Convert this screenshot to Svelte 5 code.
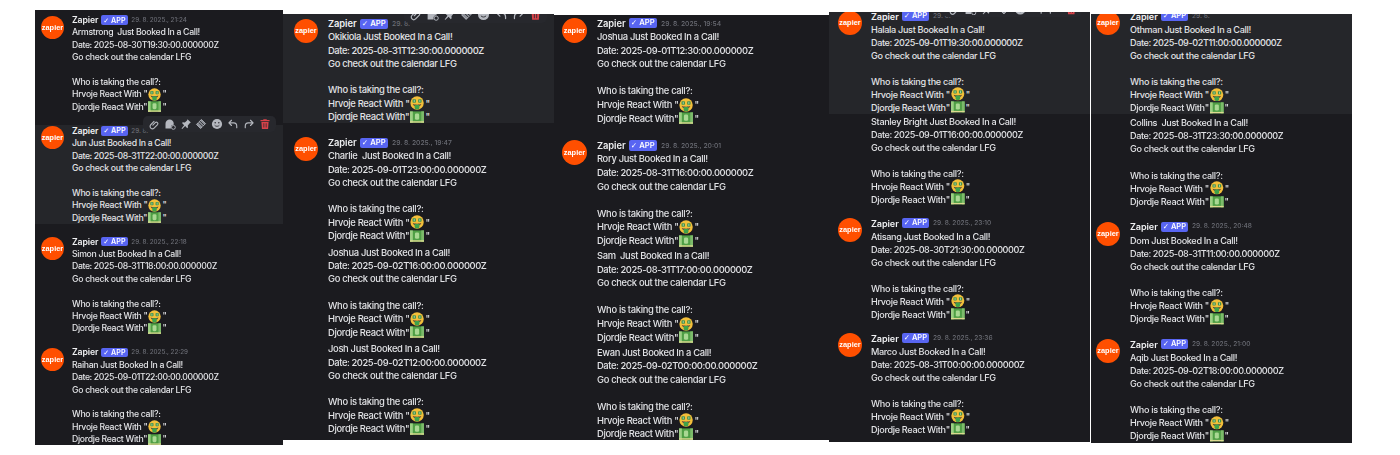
<script lang="ts">
	type Message = {
		name?: string;
		date: string;
		time?: string;
		hover?: boolean;
		tools?: boolean;
	};

	const columns: { cls: string; messages: Message[] }[] = [
		{
			cls: 'col-a',
			messages: [
				{ name: 'Armstrong ', date: '2025-08-30T19:30', time: '29. 8. 2025., 21:24' },
				{ name: 'Jun', date: '2025-08-31T22:00', time: '29. 8.', hover: true, tools: true },
				{ name: 'Simon', date: '2025-08-31T18:00', time: '29. 8. 2025., 22:18' },
				{ name: 'Raihan', date: '2025-09-01T22:00', time: '29. 8. 2025., 22:29' }
			]
		},
		{
			cls: 'col-b',
			messages: [
				{ name: 'Okikiola', date: '2025-08-31T12:30', time: '29. 8.', hover: true, tools: true },
				{ name: 'Charlie ', date: '2025-09-01T23:00', time: '29. 8. 2025., 19:47' },
				{ name: 'Joshua', date: '2025-09-02T16:00' },
				{ name: 'Josh', date: '2025-09-02T12:00' }
			]
		},
		{
			cls: 'col-c',
			messages: [
				{ name: 'Joshua', date: '2025-09-01T12:30', time: '29. 8. 2025., 19:54' },
				{ name: 'Rory', date: '2025-08-31T16:00', time: '29. 8. 2025., 20:01' },
				{ name: 'Sam ', date: '2025-08-31T17:00' },
				{ name: 'Ewan', date: '2025-09-02T00:00' }
			]
		},
		{
			cls: 'col-d',
			messages: [
				{ name: 'Halala', date: '2025-09-01T19:30', time: '29. 8.', hover: true, tools: true },
				{ name: 'Stanley Bright', date: '2025-09-01T16:00' },
				{ name: 'Atisang', date: '2025-08-30T21:30', time: '29. 8. 2025., 23:10' },
				{ name: 'Marco', date: '2025-08-31T00:00', time: '29. 8. 2025., 23:36' }
			]
		},
		{
			cls: 'col-e',
			messages: [
				{ name: 'Othman', date: '2025-09-02T11:00', time: '29. 8.', hover: true, tools: true },
				{ name: 'Collins ', date: '2025-08-31T23:30' },
				{ name: 'Dom', date: '2025-08-31T11:00', time: '29. 8. 2025., 20:48' },
				{ name: 'Aqib', date: '2025-09-02T18:00', time: '29. 8. 2025., 21:00' }
			]
		}
	];
</script>

{#snippet moneyFace()}
	<svg class="emoji" viewBox="0 0 20 20" aria-hidden="true">
		<circle cx="10" cy="10" r="9.5" fill="#f3bf3a" />
		<path d="M4 11.5c1.5 1.2 10.5 1.2 12 0-.4 2-2 3-3 3.2H7c-1-.2-2.6-1.2-3-3.2z" fill="#5d4037" />
		<path d="M6.6 12.6h6.8v4.2c0 1.4-1.4 2.4-3.4 2.4s-3.4-1-3.4-2.4z" fill="#3fa14a" />
		<rect x="3.6" y="4.6" width="4.8" height="5" rx="1" fill="#3f8f46" />
		<rect x="11.6" y="4.6" width="4.8" height="5" rx="1" fill="#3f8f46" />
		<path d="M6 5.4v3.4M14 5.4v3.4" stroke="#cfeccd" stroke-width="1" />
	</svg>
{/snippet}

{#snippet bill()}
	<svg class="emoji" viewBox="0 0 20 20" aria-hidden="true">
		<rect x="0" y="2" width="20" height="16" fill="#4f9f45" />
		<rect x="0" y="2" width="4" height="16" fill="#9ccf84" />
		<rect x="16" y="2" width="4" height="16" fill="#7dbb6b" />
		<rect x="7" y="5" width="6" height="9" rx="2" fill="#a9d893" />
		<rect x="0" y="16" width="20" height="2" fill="#dcd98f" />
	</svg>
{/snippet}

{#snippet toolbar()}
	<div class="toolbar">
		<svg viewBox="0 0 16 16" fill="none" stroke="#b5b8bf" stroke-width="1.5" stroke-linecap="round">
			<path d="M6.5 9.5l3.4-3.6a2 2 0 0 1 2.8 2.8l-4.6 4.7a3.1 3.1 0 0 1-4.4-4.4l4.3-4.4" />
		</svg>
		<svg viewBox="0 0 16 16" fill="#b5b8bf">
			<path d="M2 14V7.500a5.500 5.500 0 0 1 11 0v1.500a3.500 3.500 0 0 0-3.500 5z" />
			<circle cx="12.500" cy="12.500" r="2.600" fill="none" stroke="#b5b8bf" stroke-width="1.200" />
		</svg>
		<svg viewBox="0 0 16 16" fill="#b5b8bf">
			<path d="M10 1.500l4.500 4.500-1.300.7-2.800 3.300.2 2.700-1 1-2.700-3L3 14.500l-1-.5 3.500-4.500L2.700 6.800l1-1 2.700.2 3-2.800z" />
		</svg>
		<svg viewBox="0 0 16 16" fill="none" stroke="#b5b8bf" stroke-width="1.200">
			<path d="M2 8.500L8.500 2l5.500 5.500L7.500 14z" fill="#8b8e96" />
			<path d="M5 6l5.500 5.500M6.800 4.200l5.500 5.500" stroke="#2a2b30" />
		</svg>
		<svg viewBox="0 0 16 16">
			<circle cx="8" cy="8" r="6.800" fill="#b5b8bf" />
			<circle cx="5.600" cy="6.400" r="1" fill="#2a2b30" />
			<circle cx="10.400" cy="6.400" r="1" fill="#2a2b30" />
			<path d="M4.800 9.600c1.400 2 5 2 6.400 0" fill="none" stroke="#2a2b30" stroke-width="1.100" />
		</svg>
		<svg viewBox="0 0 16 16" fill="none" stroke="#b5b8bf" stroke-width="1.500" stroke-linecap="round" stroke-linejoin="round">
			<path d="M6 3L2.500 6.500 6 10M3 6.500h6c2.600 0 4 1.800 4 4.500v2" />
		</svg>
		<svg viewBox="0 0 16 16" fill="none" stroke="#b5b8bf" stroke-width="1.500" stroke-linecap="round" stroke-linejoin="round">
			<path d="M10 3l3.500 3.500L10 10M13 6.500H7c-2.600 0-4 1.800-4 4.500v2" />
		</svg>
		<svg viewBox="0 0 16 16" fill="#d9434a">
			<path d="M6 1.500h4l.6 1.300H14v1.400H2V2.800h3.400z" />
			<path d="M3.200 5.200h9.600l-.7 9.300H3.900zM6 7v5.500h1V7zm3 0v5.500h1V7z" fill-rule="evenodd" />
		</svg>
	</div>
{/snippet}

<main class="page">
	{#each columns as column}
		<section class="column {column.cls}">
			{#each column.messages as msg}
				<article class="message" class:hover={msg.hover} class:grouped={!msg.time}>
					{#if msg.time}
						<div class="avatar">zapier</div>
					{/if}
					<div class="body">
						{#if msg.time}
							<div class="head">
								<span class="author">Zapier</span>
								<span class="badge"><span class="tick">✓</span> APP</span>
								<span class="time">{msg.time}</span>
							</div>
						{/if}
						<div class="title">{msg.name} Just Booked In a Call!</div>
						<div class="date">Date: {msg.date}:00.000000Z</div>
						<div>Go check out the calendar LFG</div>
						<div class="blank"></div>
						<div>Who is taking the call?:</div>
						<div class="react">Hrvoje React With "{@render moneyFace()}"</div>
						<div class="react">Djordje React With"{@render bill()}"</div>
					</div>
					{#if msg.tools}
						{@render toolbar()}
					{/if}
				</article>
			{/each}
		</section>
	{/each}
</main>

<style>
	:global(body) {
		background: #ffffff;
	}

	.page {
		display: flex;
		align-items: flex-start;
		height: 455px;
		padding-left: 35px;
		box-sizing: border-box;
		filter: blur(0.35px);
	}

	.column {
		flex: none;
		box-sizing: border-box;
		overflow: hidden;
		background: #1b1b1f;
		color: #e2e3e6;
		font-family: Inter, 'Noto Sans', sans-serif;
		font-size: var(--fs);
		font-weight: 500;
		line-height: var(--lh);
		letter-spacing: -0.035em;
		white-space: nowrap;
	}

	.col-a {
		--fs: 8.7px;
		--lh: 12.4px;
		--av: 23px;
		--left: 6px;
		--av-gap: 8px;
		--top: 4px;
		--gap: 11.6px;
		--gap-grouped: 2px;
		--tools-top: -9px;
		--tools-right: 7px;
		--icon: 12px;
		--icon-gap: 3.9px;
		width: 248px;
		height: 435px;
		margin-top: 10px;
	}

	.col-b {
		--fs: 9.4px;
		--lh: 13.3px;
		--av: 24px;
		--left: 11px;
		--av-gap: 10px;
		--lead: 3px;
		--gap: 12.6px;
		--gap-grouped: 3.4px;
		--tools-top: -8px;
		--tools-right: 7px;
		--icon: 13px;
		--icon-gap: 4.2px;
		width: 271px;
		height: 426px;
		margin-top: 14px;
	}

	.col-c {
		--fs: 9.4px;
		--lh: 13.6px;
		--av: 25px;
		--left: 8px;
		--av-gap: 10px;
		--top: 1.5px;
		--gap: 13.5px;
		--gap-grouped: 1.5px;
		width: 275px;
		height: 425px;
		margin-top: 15px;
	}

	.col-d {
		--fs: 9.1px;
		--lh: 13px;
		--av: 24px;
		--left: 9px;
		--av-gap: 9px;
		--top: -2.5px;
		--gap: 11px;
		--gap-grouped: 1px;
		--tools-top: -9px;
		--tools-right: 8px;
		--icon: 12.5px;
		--icon-gap: 4.2px;
		width: 261px;
		height: 430px;
		margin-top: 12px;
	}

	.col-e {
		--fs: 9.1px;
		--lh: 13.1px;
		--av: 24px;
		--left: 5px;
		--av-gap: 10px;
		--top: -4.5px;
		--gap: 12.5px;
		--gap-grouped: 2px;
		--tools-top: -11px;
		--tools-right: 10px;
		--icon: 12.5px;
		--icon-gap: 4.2px;
		width: 261px;
		height: 429px;
		margin-top: 14px;
		margin-left: 1px;
	}

	.message {
		position: relative;
		display: flex;
		align-items: flex-start;
		padding-left: var(--left);
		margin-top: var(--gap);
	}

	.message:first-child {
		margin-top: var(--top, 0);
		padding-top: var(--lead, 0);
	}

	.message.grouped {
		margin-top: var(--gap-grouped);
		padding-left: calc(var(--left) + var(--av) + var(--av-gap));
	}

	.message.hover {
		background: #25262a;
	}

	.title {
		white-space: pre;
	}

	.date {
		letter-spacing: -0.045em;
	}

	.avatar {
		flex: none;
		width: var(--av);
		height: var(--av);
		margin-top: 1.5px;
		margin-right: var(--av-gap);
		border-radius: 50%;
		background: #ff4f00;
		color: #ffffff;
		font-family: 'Liberation Sans', sans-serif;
		font-size: 7.4px;
		font-weight: 700;
		letter-spacing: 0;
		line-height: var(--av);
		text-align: center;
	}

	.head {
		display: flex;
		align-items: center;
		gap: 0.32em;
		height: var(--lh);
	}

	.author {
		font-weight: 600;
		color: #eff0f2;
		letter-spacing: -0.01em;
	}

	.badge {
		padding: 0.16em 0.3em;
		border-radius: 2px;
		background: #5865f2;
		color: #ffffff;
		font-size: 0.82em;
		font-weight: 600;
		letter-spacing: 0;
		line-height: 1em;
	}

	.tick {
		font-family: 'DejaVu Sans', sans-serif;
	}

	.time {
		margin-left: 0.15em;
		color: #6b6d75;
		font-size: 0.72em;
		letter-spacing: 0;
	}

	.blank {
		height: var(--lh);
	}

	.react {
		display: flex;
		align-items: center;
		height: var(--lh);
	}

	.emoji {
		flex: none;
		width: 1.5em;
		height: 1.5em;
		margin: 0 1px;
	}

	.toolbar {
		position: absolute;
		top: var(--tools-top);
		right: var(--tools-right);
		display: flex;
		align-items: center;
		gap: var(--icon-gap);
		padding: 2px 5px;
		border-radius: 5px;
		background: #27282d;
	}

	.toolbar svg {
		display: block;
		width: var(--icon);
		height: var(--icon);
	}
</style>
